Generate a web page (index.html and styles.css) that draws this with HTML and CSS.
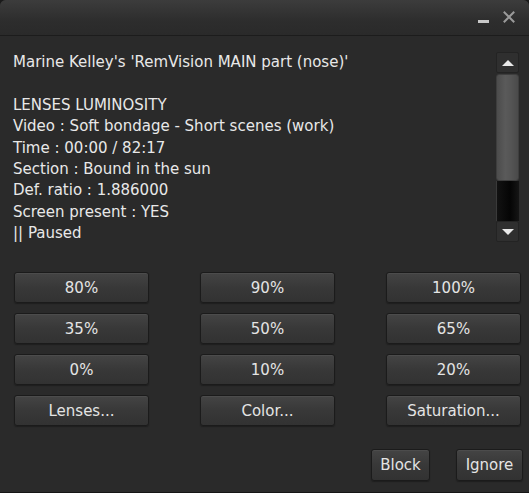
FILE: index.html
```html
<!DOCTYPE html>
<html>
<head>
<meta charset="utf-8">
<link rel="stylesheet" href="styles.css">
</head>
<body>
<div class="window">
  <div class="titlebar">
    <span class="tb-min"></span>
    <svg class="tb-close" width="12" height="12" viewBox="0 0 12 12"><path d="M1.5 1.5 L10.5 10.5 M10.5 1.5 L1.5 10.5" stroke="#9a9a9a" stroke-width="2" stroke-linecap="square"/></svg>
  </div>
  <div class="content">
    <div class="textarea">
      <div class="text">Marine Kelley's 'RemVision MAIN part (nose)'<br><br>LENSES LUMINOSITY<br>Video : Soft bondage - Short scenes (work)<br>Time : 00:00 / 82:17<br>Section : Bound in the sun<br>Def. ratio : 1.886000<br>Screen present : YES<br>|| Paused</div>
      <div class="scrollbar">
        <div class="sb-btn"><svg width="12" height="6" viewBox="0 0 12 6"><path d="M0 6 L6 0 L12 6 Z" fill="#e8e8e8"/></svg></div>
        <div class="sb-thumb"></div>
        <div class="sb-track"></div>
        <div class="sb-btn"><svg width="12" height="6" viewBox="0 0 12 6"><path d="M0 0 L6 6 L12 0 Z" fill="#e8e8e8"/></svg></div>
      </div>
    </div>
    <div class="grid">
      <button class="btn">80%</button>
      <button class="btn">90%</button>
      <button class="btn">100%</button>
      <button class="btn">35%</button>
      <button class="btn">50%</button>
      <button class="btn">65%</button>
      <button class="btn">0%</button>
      <button class="btn">10%</button>
      <button class="btn">20%</button>
      <button class="btn">Lenses...</button>
      <button class="btn">Color...</button>
      <button class="btn">Saturation...</button>
    </div>
    <div class="footer">
      <button class="btn btn-block">Block</button>
      <button class="btn btn-ignore">Ignore</button>
    </div>
  </div>
</div>
</body>
</html>
```
FILE: styles.css
```css
html, body {
  margin: 0;
  padding: 0;
  background: #1a1a1a;
}
.window {
  width: 529px;
  height: 493px;
  box-sizing: border-box;
  background: #2a2a2a;
  border-radius: 6px 6px 0 0;
  border-bottom: 1px solid #151515;
  overflow: hidden;
  font-family: "DejaVu Sans", sans-serif;
  color: #e8e8e8;
  display: flex;
  flex-direction: column;
}
.titlebar {
  height: 35px;
  flex: none;
  background: linear-gradient(#3c3c3c, #2d2d2d 60%, #2a2a2a);
  border-bottom: 1px solid #1c1c1c;
  position: relative;
}
.tb-min {
  position: absolute;
  left: 478px;
  top: 20px;
  width: 11px;
  height: 3px;
  background: #c8c8c8;
}
.tb-close {
  position: absolute;
  left: 503px;
  top: 11px;
}
.content {
  flex: 1;
  display: flex;
  flex-direction: column;
  padding: 16px 6px 0 13px;
}
.textarea {
  display: flex;
  justify-content: space-between;
  height: 190px;
}
.text {
  font-size: 15px;
  line-height: 21.4px;
  margin-top: 0px;
  white-space: nowrap;
}
.scrollbar {
  width: 23px;
  margin-right: 4px;
  display: flex;
  flex-direction: column;
}
.sb-btn {
  height: 21px;
  flex: none;
  box-sizing: border-box;
  background: #2f2f2f;
  border: 1px solid #232323;
  border-radius: 2px;
  display: flex;
  align-items: center;
  justify-content: center;
}
.sb-thumb {
  height: 107px;
  flex: none;
  margin-top: 1px;
  box-sizing: border-box;
  border-radius: 3px;
  background: linear-gradient(90deg, #4c4c4c, #5a5a5a 40%, #555 65%, #4a4a4a);
  border: 1px solid #3e3e3e;
}
.sb-track {
  flex: 1;
  background: linear-gradient(90deg, #121212, #050505 60%, #151515);
  border-left: 1px solid #3a3a3a;
}
.grid {
  margin-top: 30px;
  display: grid;
  grid-template-columns: repeat(3, 135px);
  column-gap: 51px;
  row-gap: 10px;
  padding-left: 1px;
}
.btn {
  height: 31px;
  box-sizing: border-box;
  font-family: "DejaVu Sans", sans-serif;
  font-size: 15px;
  color: #e4e4e4;
  background: linear-gradient(#444444, #383838 50%, #323232);
  border: 1px solid #1b1b1b;
  border-radius: 3px;
  box-shadow: inset 0 1px 0 #4c4c4c, 0 1px 1px #1e1e1e;
  padding: 0;
}
.footer {
  display: flex;
  justify-content: flex-end;
  gap: 26px;
  margin-top: 23px;
}
.btn-block {
  width: 59px;
  height: 32px;
}
.btn-ignore {
  width: 67px;
  height: 32px;
}
```
